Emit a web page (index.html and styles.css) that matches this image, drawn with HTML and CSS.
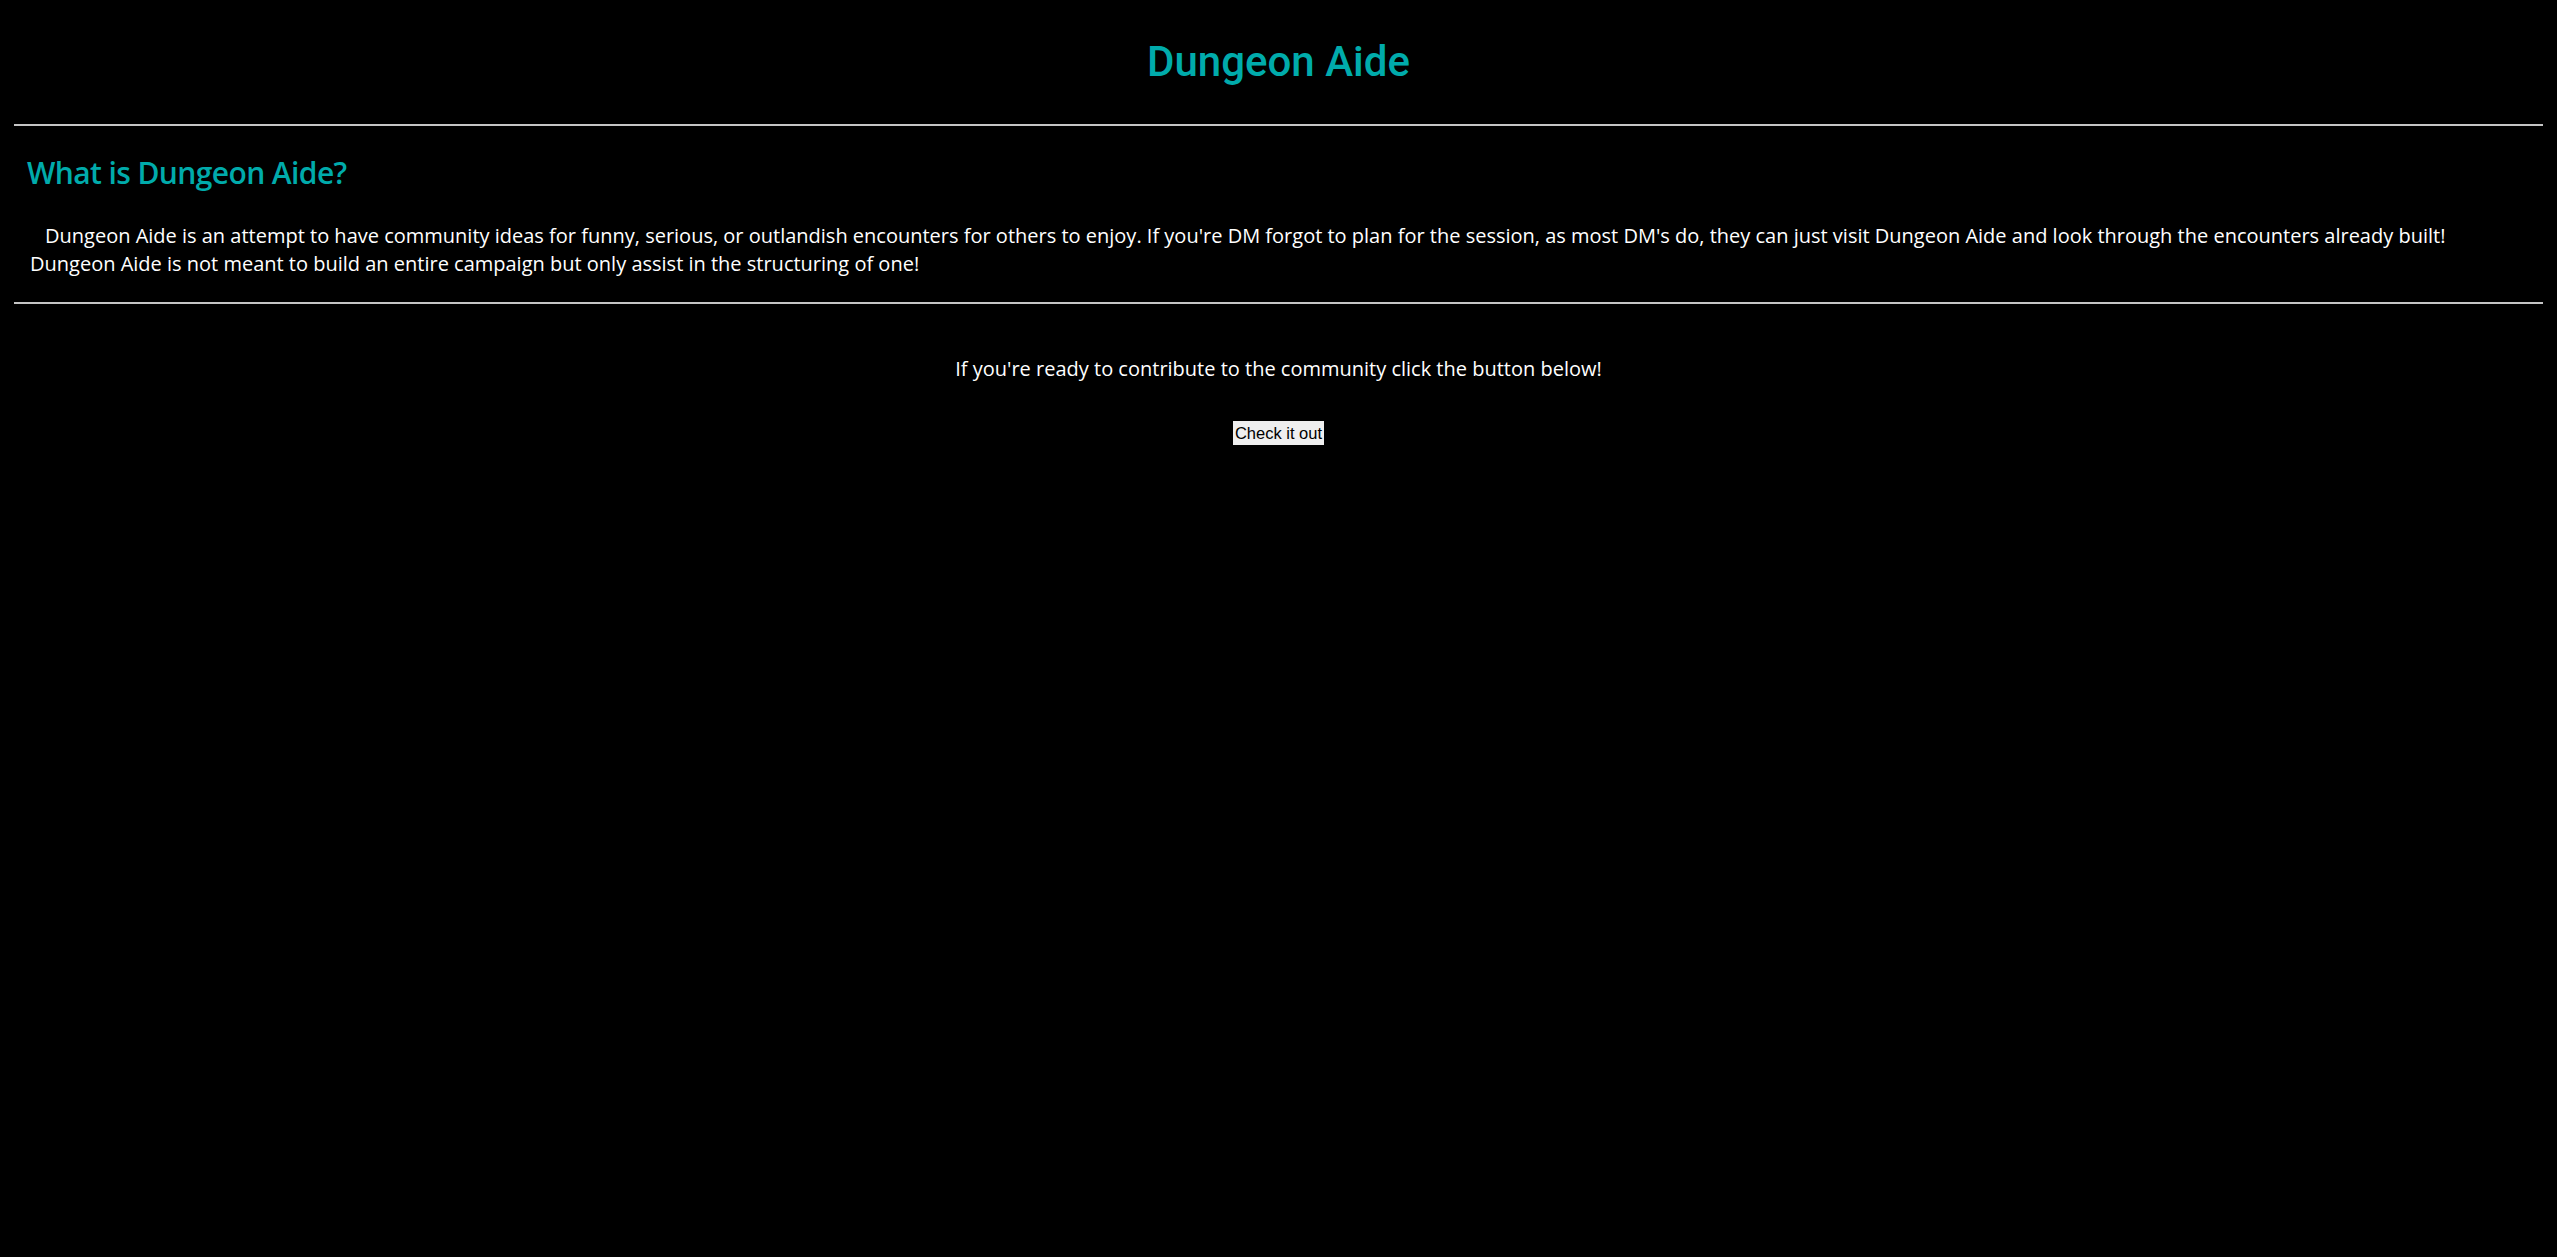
FILE: index.html
```html
<!DOCTYPE html>
<html lang="en">
<head>
<meta charset="utf-8">
<title>Dungeon Aide</title>
<link rel="stylesheet" href="styles.css">
</head>
<body>
<header class="masthead">
  <h1 class="title">Dungeon Aide</h1>
</header>
<hr class="rule">
<section class="about">
  <h2 class="about-heading">What is Dungeon Aide?</h2>
  <p class="about-text">Dungeon Aide is an attempt to have community ideas for funny, serious, or outlandish encounters for others to enjoy. If you're DM forgot to plan for the session, as most DM's do, they can just visit Dungeon Aide and look through the encounters already built!<br>Dungeon Aide is not meant to build an entire campaign but only assist in the structuring of one!</p>
</section>
<hr class="rule">
<section class="cta">
  <p class="cta-text">If you're ready to contribute to the community click the button below!</p>
  <button class="cta-button" type="button">Check it out</button>
</section>
</body>
</html>
```

FILE: styles.css
```css
html, body {
  background: #000;
}
body {
  margin: 0;
  padding: 8px 14px;
  color: #fff;
  font-family: "Open Sans", "Noto Sans", sans-serif;
}
.masthead {
  text-align: center;
}
.title {
  margin: 25px 0 0;
  font-family: Roboto, "Open Sans", sans-serif;
  font-size: 42px;
  font-weight: 500;
  line-height: 57px;
  color: #00abab;
}
.rule {
  margin: 34px 0 0;
  height: 0;
  border: 0;
  border-top: 2px solid #c4c4c4;
}
.about {
  padding: 0 13px;
}
.about-heading {
  margin: 26px 0 0;
  font-size: 30px;
  font-weight: 600;
  letter-spacing: -0.6px;
  line-height: 41px;
  color: #00abab;
}
.about-text {
  margin: 29px 0 24px;
  padding-left: 3px;
  font-size: 20px;
  line-height: 28px;
  text-indent: 15px;
}
.about + .rule {
  margin-top: 0;
}
.cta {
  display: flex;
  flex-direction: column;
  align-items: center;
}
.cta-text {
  margin: 51px 0 0;
  font-size: 20px;
  line-height: 28px;
}
.cta-button {
  margin-top: 38px;
  height: 24px;
  padding: 0 2px;
  border: 0;
  border-radius: 0;
  background: #efefef;
  color: #000;
  font-family: "Liberation Sans", Arial, sans-serif;
  font-size: 16.5px;
  line-height: 24px;
}
```
